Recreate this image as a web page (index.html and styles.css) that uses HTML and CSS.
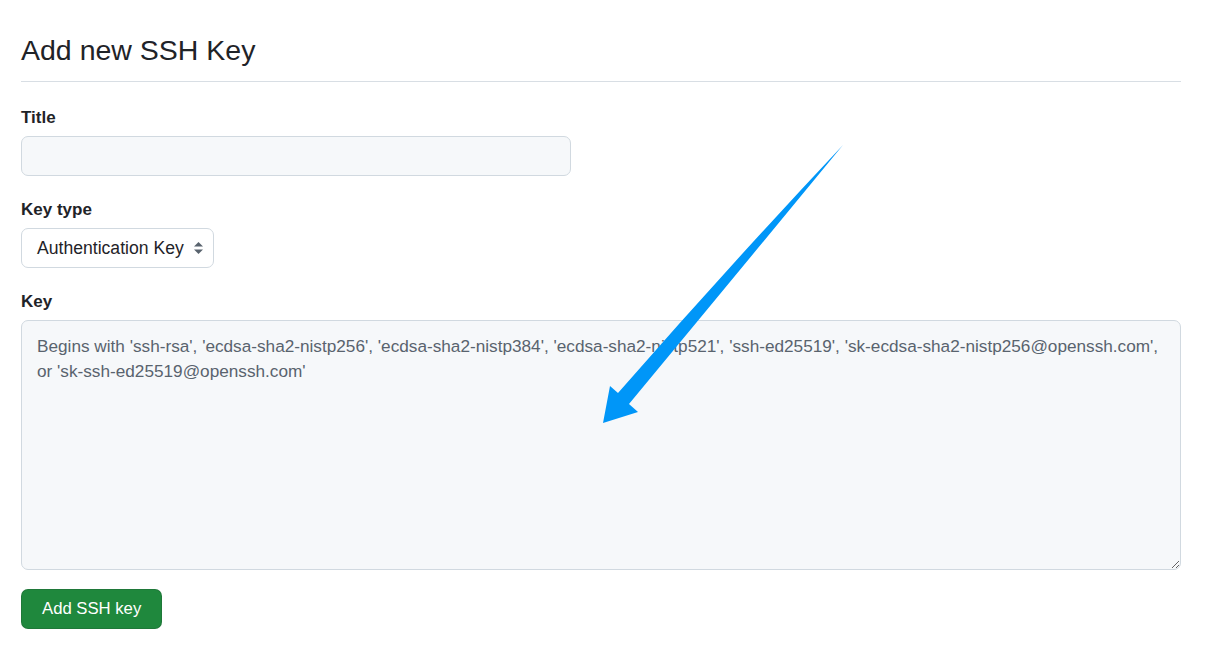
FILE: index.html
```html
<!DOCTYPE html>
<html lang="en">
<head>
<meta charset="utf-8">
<title>Add new SSH Key</title>
<link rel="stylesheet" href="styles.css">
</head>
<body>
<main class="page">
  <div class="subhead">
    <h2 class="subhead-heading">Add new SSH Key</h2>
  </div>
  <form class="form">
    <div class="form-group">
      <label class="form-label" for="title">Title</label>
      <input class="form-input title-input" id="title" type="text">
    </div>
    <div class="form-group">
      <label class="form-label">Key type</label>
      <div class="select">
        <span>Authentication Key</span>
        <svg class="select-icon" width="11" height="14" viewBox="0 0 11 14" aria-hidden="true">
          <path d="M1 5.5 L5.5 1 L10 5.5 Z" fill="#59636e"/>
          <path d="M1 8.5 L5.5 13 L10 8.5 Z" fill="#59636e"/>
        </svg>
      </div>
    </div>
    <div class="form-group">
      <label class="form-label" for="key">Key</label>
      <textarea class="form-input key-input" id="key" placeholder="Begins with 'ssh-rsa', 'ecdsa-sha2-nistp256', 'ecdsa-sha2-nistp384', 'ecdsa-sha2-nistp521', 'ssh-ed25519', 'sk-ecdsa-sha2-nistp256@openssh.com', or 'sk-ssh-ed25519@openssh.com'"></textarea>
    </div>
    <button class="btn-primary" type="button">Add SSH key</button>
  </form>
  <svg class="annotation" width="1224" height="655" viewBox="0 0 1224 655" aria-hidden="true">
    <path d="M843 145 Q740 270 629 404 L638 412 L603 423 L610 386 L618 393 Q730 265 843 145 Z" fill="#0096f8"/>
  </svg>
</main>
</body>
</html>
```
FILE: styles.css
```css
* { box-sizing: border-box; }
html, body { margin: 0; padding: 0; background: #ffffff; }
body {
  font-family: "Liberation Sans", Arial, sans-serif;
  color: #1f2328;
  font-size: 17.5px;
  line-height: 1.5;
}
.page {
  position: relative;
  width: 1224px;
  height: 655px;
  padding: 28px 43px 0 21px;
}
.subhead {
  border-bottom: 1px solid #d8dee4;
  padding-bottom: 8px;
  margin-bottom: 22px;
}
.subhead-heading {
  margin: 0;
  font-size: 28.5px;
  font-weight: 400;
  line-height: 45px;
}
.form-group { margin-bottom: 20px; }
.form-label {
  display: block;
  font-weight: 700;
  font-size: 17px;
  line-height: 26px;
  margin-bottom: 6px;
}
.form-label:first-child { position: relative; top: 1px; }
.form-input {
  display: block;
  background: #f6f8fa;
  border: 1px solid #d1d9e0;
  border-radius: 7px;
  font-family: inherit;
  font-size: 17px;
  color: #1f2328;
  outline: none;
}
.title-input { width: 550px; height: 40px; padding: 0 15px; }
.select {
  display: inline-flex;
  align-items: center;
  gap: 9px;
  height: 40px;
  padding: 0 9px 0 15px;
  border: 1px solid #d1d9e0;
  border-radius: 7px;
  background: #ffffff;
  font-size: 17.6px;
}
.select-icon { display: block; }
.key-input {
  width: 1160px;
  height: 250px;
  padding: 13px 15px 10px;
  font-size: 17.2px;
  line-height: 25px;
  resize: vertical;
}
.key-input::placeholder { color: #59636e; opacity: 1; }
.btn-primary {
  display: block;
  height: 40px;
  padding: 0 20px;
  background: #1f883d;
  color: #ffffff;
  border: 1px solid rgba(31,35,40,0.15);
  border-radius: 7px;
  font-family: inherit;
  font-size: 16.7px;
  font-weight: 400;
  margin-top: -1px;
}
.annotation {
  position: absolute;
  left: 0;
  top: 0;
  pointer-events: none;
}
```
